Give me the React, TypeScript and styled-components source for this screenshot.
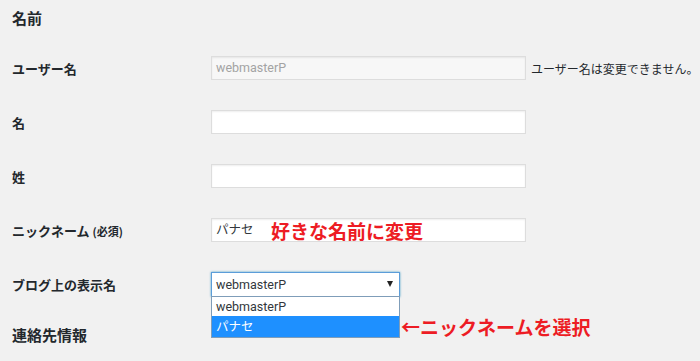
import { createGlobalStyle, styled } from "styled-components";

const GlobalStyle = createGlobalStyle`
    body {
        margin: 0;
        background: #f1f1f1;
        color: #23282d;
        font-family: Roboto, "Noto Sans CJK JP", sans-serif;
    }
`;

const Page = styled.div`
    padding: 0 12px;
    width: 700px;
    height: 361px;
    box-sizing: border-box;
    overflow: hidden;
`;

const Heading = styled.h2<{ $top?: number }>`
    margin: ${(p) => p.$top ?? 0}px 0 0;
    font-family: "Noto Sans CJK JP", sans-serif;
    font-size: 15px;
    font-weight: 700;
    line-height: 36px;
    color: #23282d;
`;

const Table = styled.div`
    margin-top: 5px;
    display: grid;
    grid-template-columns: 199px 1fr;
    grid-auto-rows: 54px;
    align-items: center;
`;

const Label = styled.label`
    font-family: "Noto Sans CJK JP", sans-serif;
    font-size: 13px;
    font-weight: 700;
    color: #23282d;
`;

const Small = styled.span`
    font-size: 11px;
`;

const Field = styled.div`
    position: relative;
    display: flex;
    align-items: center;
    gap: 5px;
`;

const Input = styled.div<{ $disabled?: boolean }>`
    flex: none;
    width: 315px;
    height: 24px;
    box-sizing: border-box;
    padding: 0 4px;
    border: 1px solid #ddd;
    box-shadow: inset 0 1px 2px rgba(0, 0, 0, 0.07);
    background: ${(p) => (p.$disabled ? "#f7f7f7" : "#fff")};
    color: ${(p) => (p.$disabled ? "#a3a3a3" : "#32373c")};
    font-family: Roboto, "Noto Sans CJK JP", sans-serif;
    font-size: 12.5px;
    line-height: 22px;
`;

const Note = styled.span`
    white-space: nowrap;
    font-family: "Noto Sans CJK JP", sans-serif;
    font-size: 12px;
    color: #23282d;
`;

const Annotation = styled.span<{ $left: number; $top: number }>`
    position: absolute;
    left: ${(p) => p.$left}px;
    top: ${(p) => p.$top}px;
    white-space: nowrap;
    font-family: "Noto Sans CJK JP", sans-serif;
    font-size: 19px;
    font-weight: 700;
    line-height: 24px;
    color: #ed1c24;
`;

const Select = styled.div`
    flex: none;
    width: 189px;
    height: 25px;
    box-sizing: border-box;
    padding: 0 6px 0 4px;
    border: 1px solid #5b9dd9;
    box-shadow: 0 0 2px rgba(30, 140, 190, 0.8);
    background: #fff;
    display: flex;
    align-items: center;
    justify-content: space-between;
    font-size: 12.5px;
    color: #32373c;
`;

const Arrow = styled.span`
    width: 0;
    height: 0;
    border-left: 3.5px solid transparent;
    border-right: 3.5px solid transparent;
    border-top: 6px solid #222;
`;

const ListBox = styled.div`
    position: absolute;
    left: 0;
    top: 24px;
    width: 189px;
    box-sizing: border-box;
    border: 1px solid #7f9db9;
    background: #fff;
    z-index: 2;
`;

const Option = styled.div<{ $selected?: boolean }>`
    height: ${(p) => (p.$selected ? 21 : 19)}px;
    padding: 0 4px;
    font-family: Roboto, "Noto Sans CJK JP", sans-serif;
    font-size: 12.5px;
    line-height: ${(p) => (p.$selected ? 21 : 19)}px;
    background: ${(p) => (p.$selected ? "#1e90ff" : "#fff")};
    color: ${(p) => (p.$selected ? "#fff" : "#32373c")};
`;

export default function App() {
    return <>
        <GlobalStyle />
        <Page>
            <Heading>名前</Heading>
            <Table>
                <Label>ユーザー名</Label>
                <Field>
                    <Input $disabled>webmasterP</Input>
                    <Note>ユーザー名は変更できません。</Note>
                </Field>

                <Label>名</Label>
                <Field><Input /></Field>

                <Label>姓</Label>
                <Field><Input /></Field>

                <Label>ニックネーム <Small>(必須)</Small></Label>
                <Field>
                    <Input>パナセ</Input>
                    <Annotation $left={60} $top={1}>好きな名前に変更</Annotation>
                </Field>

                <Label>ブログ上の表示名</Label>
                <Field>
                    <Select>webmasterP<Arrow /></Select>
                    <ListBox>
                        <Option>webmasterP</Option>
                        <Option $selected>パナセ</Option>
                    </ListBox>
                    <Annotation $left={190} $top={43}>←ニックネームを選択</Annotation>
                </Field>
            </Table>
            <Heading $top={6}>連絡先情報</Heading>
        </Page>
    </>;
}
